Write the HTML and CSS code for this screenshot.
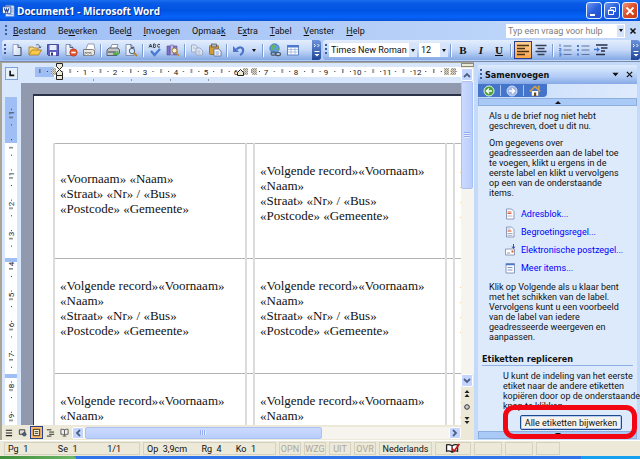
FILE: index.html
```html
<!DOCTYPE html>
<html lang="nl">
<head>
<meta charset="utf-8">
<title>Document1 - Microsoft Word</title>
<link rel="stylesheet" href="styles.css">
</head>
<body>
<svg class="defs" aria-hidden="true">
  <defs>
    <linearGradient id="paper" x1="0" y1="0" x2="1" y2="1"><stop offset="0" stop-color="#fff"/><stop offset="1" stop-color="#c9d6ee"/></linearGradient>
    <pattern id="hatch" width="2" height="2" patternUnits="userSpaceOnUse"><rect width="2" height="2" fill="#d8d4c8"/><rect width="1" height="1" fill="#8c887c"/><rect x="1" y="1" width="1" height="1" fill="#a8a498"/></pattern>
    <pattern id="hticks" x="33.7" width="30.3" height="10" patternUnits="userSpaceOnUse"><rect x="7" y="8" width="1" height="1" fill="#333"/><rect x="15" y="6" width="1" height="4" fill="#444"/><rect x="22.5" y="8" width="1" height="1" fill="#333"/></pattern>
    <pattern id="vticks" y="79.5" width="12" height="30.3" patternUnits="userSpaceOnUse"><rect x="6" y="7" width="1" height="1" fill="#333"/><rect x="4" y="15" width="4" height="1" fill="#444"/><rect x="6" y="22.5" width="1" height="1" fill="#333"/></pattern>
    <symbol id="chev" viewBox="0 0 8 6"><path d="M1 5L4 2L7 5" fill="none" stroke="#4d6185" stroke-width="1.8"/></symbol>
  </defs>
</svg>

<header class="titlebar">
  <svg class="appicon" viewBox="0 0 14 14"><path d="M4 1h8l1 1v11H4z" fill="#e8effb" stroke="#5f86cc" stroke-width=".8"/><path d="M10 4h2M10 6h2M10 8h2M6 11h6" stroke="#7d9ad2"/><rect x=".5" y="2.500" width="9" height="7" fill="#fff" stroke="#2f59a8"/><path d="M2.500 4L4 8L5 5L6 8L7.500 4" fill="none" stroke="#24499c" stroke-width="1.2"/></svg>
  <h1>Document1 - Microsoft Word</h1>
  <div class="winbtns">
    <button aria-label="Minimaliseren"><svg viewBox="0 0 14 14"><path d="M3 11h5" stroke="#fff" stroke-width="2"/></svg></button>
    <button aria-label="Verkleinen"><svg viewBox="0 0 14 14"><path d="M5.500 5V3.500h5v4H9" fill="none" stroke="#fff"/><path d="M3.500 6h5v4.500h-5zM3.500 6.500h5" fill="none" stroke="#fff"/></svg></button>
    <button class="close" aria-label="Sluiten"><svg viewBox="0 0 14 14"><path d="M3.500 3.500l7 7M10.500 3.500l-7 7" stroke="#fff" stroke-width="1.8"/></svg></button>
  </div>
</header>

<nav class="menubar">
  <i class="grip"></i>
  <a href="#"><u>B</u>estand</a><a href="#">Be<u>w</u>erken</a><a href="#">Beel<u>d</u></a><a href="#"><u>I</u>nvoegen</a><a href="#">Opmaa<u>k</u></a><a href="#">E<u>x</u>tra</a><a href="#"><u>T</u>abel</a><a href="#"><u>V</u>enster</a><a href="#"><u>H</u>elp</a>
  <div class="ask"><input type="text" aria-label="Vraag" placeholder="Typ een vraag voor hulp"><button aria-label="Vragen tonen"><i class="down"></i></button></div>
  <button class="docclose" aria-label="Document sluiten"><svg viewBox="0 0 8 8"><path d="M1.500 1.500l5 5M6.500 1.500l-5 5" stroke="#111" stroke-width="1.5"/></svg></button>
</nav>

<div class="toolbars">
  <div class="bar std">
    <i class="grip"></i>
    <button aria-label="Nieuw"><svg viewBox="0 0 14 14"><path d="M3 1.500h5l3 3V12.500H3z" fill="url(#paper)" stroke="#7f96bf" stroke-width=".8"/><path d="M8 1.500v3h3v8H4" fill="none" stroke="#33405c" stroke-width=".8"/></svg></button>
    <button aria-label="Openen"><svg viewBox="0 0 14 14"><path d="M1 12V4h4l1 1h4v3" fill="#f6d673" stroke="#a77a1c" stroke-width=".8"/><path d="M1 12L4 7h9.500L10.500 12z" fill="#fbc84b" stroke="#a77a1c" stroke-width=".8"/><path d="M8 2c2-1 4 0 4 3M10.500 4l1.500 1l1-1.500" fill="none" stroke="#555" stroke-width=".9"/></svg></button>
    <button aria-label="Opslaan"><svg viewBox="0 0 14 14"><path d="M1.500 1.500h11v11h-10l-1-1z" fill="#5b5fc0" stroke="#33368d" stroke-width=".8"/><rect x="3.500" y="2" width="7" height="5" fill="#e4ecfa"/><rect x="4" y="9" width="6" height="3.500" fill="#fff"/><rect x="5" y="9.500" width="2" height="3" fill="#33368d"/></svg></button>
    <button aria-label="Machtiging"><svg viewBox="0 0 14 14"><path d="M2 1.500h4l3 3v8H2z" fill="url(#paper)" stroke="#6d7ea3" stroke-width=".8"/><path d="M6 1.500v3h3" fill="none" stroke="#33405c" stroke-width=".8"/><circle cx="9.500" cy="9.500" r="3.700" fill="#e0512d" stroke="#b53315" stroke-width=".6"/><path d="M7.300 9.500h4.400" stroke="#fff" stroke-width="1.600"/></svg></button>
    <button aria-label="E-mail"><svg viewBox="0 0 14 14"><path d="M4 6L6 1h6l1 6" fill="#fff" stroke="#858ba0" stroke-width=".8"/><path d="M1.500 6.500h9l2 1v4l-2 1h-9z" fill="#e9e7e2" stroke="#6f7075" stroke-width=".9"/><path d="M3 9.500h6v3H3zM3 9.500l3 2l3-2" fill="#fff" stroke="#777" stroke-width=".7"/></svg></button>
    <i class="sep"></i>
    <button aria-label="Afdrukken"><svg viewBox="0 0 14 14"><path d="M4 6l2-4.500h6L10.500 6" fill="#fff" stroke="#6f7c96" stroke-width=".8"/><path d="M1 7l2-2h9l1.500 2v3L11 12.500H1z" fill="#c3c6cc" stroke="#4e5666" stroke-width=".9"/><path d="M2 9h8" stroke="#555" stroke-width="1.200"/><path d="M7 11h4.500V8" fill="none" stroke="#48b83c" stroke-width="1.800"/></svg></button>
    <button aria-label="Afdrukvoorbeeld"><svg viewBox="0 0 14 14"><path d="M2 1.500h5l3 3v8H2z" fill="url(#paper)" stroke="#6d7ea3" stroke-width=".8"/><path d="M7 1.500v3h3" fill="none" stroke="#33405c" stroke-width=".8"/><circle cx="8" cy="8" r="2.700" fill="#cfe6f8" stroke="#56677e"/><path d="M10 10l3 3" stroke="#b6862f" stroke-width="1.800"/></svg></button>
    <i class="sep"></i>
    <button aria-label="Spelling"><svg viewBox="0 0 14 14"><path d="M1 4.500l1.500-3.500L4 4.500M1.500 3.500h2M5.500 1v3.500h1.500q1.500-.5 0-1.700q1.200-1.300 0-1.800zM12 1.500q-2.500-1-2.500 1.300q0 2.200 2.500 1.200" fill="none" stroke="#333" stroke-width=".9"/><path d="M3 8l3.500 4L12 6" fill="none" stroke="#4779d4" stroke-width="2.200"/></svg></button>
    <button aria-label="Onderzoek"><svg viewBox="0 0 14 14"><path d="M1 3h3v9H1z" fill="#7b72c4" stroke="#4d468f" stroke-width=".6"/><path d="M4.500 2h3v10h-3z" fill="#c6bde8" stroke="#665da8" stroke-width=".6"/><path d="M8 3h3v9H8z" fill="#8b83cf" stroke="#4d468f" stroke-width=".6"/><circle cx="8.500" cy="7.500" r="2.500" fill="#f4efe0" stroke="#a07b34"/><path d="M10 9.500l3 3.500" stroke="#c08a2e" stroke-width="1.600"/></svg></button>
    <i class="sep"></i>
    <button aria-label="Kopiëren" disabled><svg viewBox="0 0 14 14"><g fill="#dfe6f4" stroke="#98a6c4" stroke-width=".9"><path d="M1.500 2h4l2 2v5h-6z"/><path d="M6 5h4l2.500 2.500V12H6z"/></g><path d="M7.500 8h3M7.500 10h3M3 5h2" stroke="#98a6c4" stroke-width=".8"/></svg></button>
    <button aria-label="Plakken"><svg viewBox="0 0 14 14"><rect x="1.500" y="2.500" width="9" height="9" rx="1" fill="#d39b36" stroke="#8a621b" stroke-width=".8"/><rect x="3.500" y="1" width="5" height="3" fill="#aab3c4" stroke="#555" stroke-width=".7"/><path d="M6 6h4.500l2.500 2v5H6z" fill="#f4f7fd" stroke="#5a6b91" stroke-width=".8"/><path d="M7.500 9h3.500M7.500 11h3.500" stroke="#6c88c4" stroke-width=".8"/></svg></button>
    <i class="sep"></i>
    <button aria-label="Ongedaan maken"><svg viewBox="0 0 14 14"><path d="M4.500 6.500C7 3 12 4 11 8.500Q10.500 11 8 12" fill="none" stroke="#4b73c9" stroke-width="2.200"/><path d="M1 3v6h6z" fill="#4b73c9"/></svg></button>
    <button class="narrow" aria-label="Meer stappen"><i class="down"></i></button>
    <i class="sep"></i>
    <button aria-label="Hyperlink"><svg viewBox="0 0 14 14"><circle cx="6.500" cy="5.500" r="4.700" fill="#5c9ce0" stroke="#376ba6" stroke-width=".7"/><path d="M3 3q3-3 5 0l-2 2q-1 3-3 2zM8 6l3-1l-1 3z" fill="#65b559"/><g fill="none" stroke="#4d555f" stroke-width="1.200"><rect x="3" y="9" width="5" height="3.200" rx="1.600"/><rect x="7.500" y="9.500" width="5" height="3.200" rx="1.600"/></g></svg></button>
    <button aria-label="Tabel invoegen"><svg viewBox="0 0 14 14"><rect x="1.500" y="2.500" width="11" height="9.500" fill="#fff" stroke="#5379bd" stroke-width=".9"/><rect x="1.500" y="2" width="11" height="2.500" fill="#4c78cf"/><path d="M5 4v8M9 4v8M2 6.500h10M2 9h10" stroke="#9db4dc" stroke-width=".8"/></svg></button>
    <button class="more" aria-label="Werkbalkopties"><svg viewBox="0 0 8 16"><path d="M1 2l1.500 1.500L1 5M4.500 2L6 3.500L4.500 5" fill="none" stroke="#fff"/><path d="M1.500 9.500h5" stroke="#fff"/><path d="M1.500 12h5L4 14.500z" fill="#fff"/></svg></button>
  </div>
  <div class="bar fmt">
    <i class="grip"></i>
    <label class="combo font"><select aria-label="Lettertype"><option>Times New Roman</option></select><i class="down"></i></label>
    <label class="combo size"><select aria-label="Tekengrootte"><option>12</option></select><i class="down"></i></label>
    <i class="sep"></i>
    <button class="b">B</button><button class="it">I</button><button class="un">U</button>
    <i class="sep"></i>
    <button class="on" aria-label="Links uitlijnen"><svg viewBox="0 0 14 14"><path d="M1 2.500h12M1 5.500h8M1 8.500h12M1 11.500h8" stroke="#4a3418" stroke-width="1.500"/></svg></button>
    <button aria-label="Centreren"><svg viewBox="0 0 14 14"><path d="M1.500 2.500h11M3.500 5.500h7M1.500 8.500h11M3.500 11.500h7" stroke="#333f59" stroke-width="1.400"/></svg></button>
    <i class="sep"></i>
    <button aria-label="Nummering"><svg viewBox="0 0 14 14"><path d="M5.500 3h8M5.500 7h8M5.500 11.500h8" stroke="#5f7398" stroke-width="1.200"/><path d="M2 1v3M1 5.500h2v1.500H1.500v1H3.500M1 10h2v3H1M1.500 11.500h1.500" fill="none" stroke="#4a78cf" stroke-width=".9"/></svg></button>
    <button aria-label="Opsommingstekens"><svg viewBox="0 0 14 14"><path d="M5.500 3h8M5.500 7h8M5.500 11.500h8" stroke="#5f7398" stroke-width="1.200"/><path d="M1 2h2v2H1zM1 6h2v2H1zM1 10.500h2v2H1z" fill="#4a78cf"/></svg></button>
    <button aria-label="Inspringing vergroten"><svg viewBox="0 0 14 14"><path d="M2 2h11.500M7 5h6.500M7 8h4M2 11.500h9" stroke="#26304a" stroke-width="1.400"/><path d="M0 6.500h3" stroke="#3f72d6" stroke-width="1.500"/><path d="M3 4l3 2.500L3 9z" fill="#3f72d6"/></svg></button>
    <button class="more" aria-label="Werkbalkopties"><svg viewBox="0 0 8 16"><path d="M1 2l1.500 1.500L1 5M4.500 2L6 3.500L4.500 5" fill="none" stroke="#fff"/><path d="M1.500 9.500h5" stroke="#fff"/><path d="M1.500 12h5L4 14.500z" fill="#fff"/></svg></button>
  </div>
</div>

<div class="work">
  <section class="editor">
    <div class="corner"><button aria-label="Tabstop"><svg viewBox="0 0 12 12"><path d="M4.500 3v5H9" fill="none" stroke="#111" stroke-width="1.800"/></svg></button></div>
    <div class="hruler">
      <svg width="900" height="18">
        <rect x="14" y="4" width="886" height="10" fill="#fff"/>
        <rect x="14" y="4" width="19" height="10" fill="#9ebef5"/>
        <rect x="15" y="4" width="885" height="8" fill="url(#hticks)"/>
        <g class="num"><text x="64" y="12">1</text><text x="94" y="12">2</text><text x="124" y="12">3</text><text x="155" y="12">4</text><text x="185" y="12">5</text><text x="215" y="12">6</text><text x="245" y="12">7</text><text x="275" y="12">8</text><text x="305" y="12">9</text><text x="336" y="12">10</text><text x="366" y="12">11</text><text x="396" y="12">12</text><text x="429" y="12">13</text></g>
        <path d="M30 5h5v7h-5zM222 5h5v7h-5zM231 5h5v7h-5zM423 5h5v7h-5zM430 5h5v7h-5z" fill="url(#hatch)"/>
        <path d="M72.500 16v2M110.500 16v2M149.500 16v2M187.500 16v2" stroke="#99a"/>
        <path d="M35.500.5h6v3l-3 3l-3-3zM35.500 12.500v-3l3-3l3 3v3zM35.500 12.500h6v4h-6z" fill="#ece9d8" stroke="#222"/>
        <path d="M216.500 12.500v-3l3-3l3 3v3z" fill="#ece9d8" stroke="#222"/>
      </svg>
    </div>
    <div class="vscroll">
      <span class="split"></span>
      <button class="sb" aria-label="Omhoog"><svg viewBox="0 0 8 6"><use href="#chev"/></svg></button>
      <span class="track"><span class="thumb"></span></span>
      <button class="sb flip" aria-label="Omlaag"><svg viewBox="0 0 8 6"><use href="#chev"/></svg></button>
      <button class="nav" aria-label="Vorige pagina"><svg viewBox="0 0 8 8"><path d="M4 0l2.500 3h-5zM4 4l2.500 3h-5z" fill="#222"/></svg></button>
      <button class="nav" aria-label="Bladeren"><svg viewBox="0 0 8 8"><circle cx="4" cy="4" r="2.300" fill="#ccc" stroke="#333"/></svg></button>
      <button class="nav" aria-label="Volgende pagina"><svg viewBox="0 0 8 8"><path d="M4 4L1.500 1h5zM4 8L1.500 5h5z" fill="#222"/></svg></button>
    </div>
    <div class="vruler">
      <svg width="12" height="900">
        <rect width="12" height="900" fill="#fff"/>
        <rect y="14" width="12" height="46" fill="#9ebef5"/>
        <rect y="22" width="12" height="878" fill="url(#vticks)"/>
        <rect width="12" height="14" fill="#d8e7fc"/>
        <g class="num"><text transform="translate(9 30) rotate(-90)">1</text><text transform="translate(9 91) rotate(-90)">1</text><text transform="translate(9 121) rotate(-90)">2</text><text transform="translate(9 151) rotate(-90)">3</text><text transform="translate(9 181) rotate(-90)">4</text><text transform="translate(9 212) rotate(-90)">5</text><text transform="translate(9 242) rotate(-90)">6</text><text transform="translate(9 272) rotate(-90)">7</text><text transform="translate(9 303) rotate(-90)">8</text><text transform="translate(9 333) rotate(-90)">9</text></g>
        <path d="M0 175h12v4H0zM0 291h12v4H0z" fill="#9ebef5"/>
      </svg>
    </div>
    <main class="canvas">
      <article class="page">
        <table>
          <colgroup><col class="label"><col class="gap"><col class="label"><col class="gap"><col></colgroup>
          <tr><td>«Voornaam» «Naam»<br>«Straat» «Nr» / «Bus»<br>«Postcode» «Gemeente»</td><td></td><td>«Volgende record»«Voornaam» «Naam»<br>«Straat» «Nr» / «Bus»<br>«Postcode» «Gemeente»</td><td></td><td>«<br>«<br>«<br>«</td></tr>
          <tr><td>«Volgende record»«Voornaam» «Naam»<br>«Straat» «Nr» / «Bus»<br>«Postcode» «Gemeente»</td><td></td><td>«Volgende record»«Voornaam» «Naam»<br>«Straat» «Nr» / «Bus»<br>«Postcode» «Gemeente»</td><td></td><td>«<br>«<br>«<br>«</td></tr>
          <tr class="last"><td>«Volgende record»«Voornaam» «Naam»</td><td></td><td>«Volgende record»«Voornaam» «Naam»</td><td></td><td>«<br>«</td></tr>
        </table>
      </article>
    </main>
    <div class="hscroll">
      <button class="view" aria-label="Normaal"><svg viewBox="0 0 10 10"><path d="M2 2.500h7M2 5.500h7M2 8.500h7" stroke="#222" stroke-width="1.200"/></svg></button>
      <button class="view" aria-label="Weblay-out"><svg viewBox="0 0 10 10"><path d="M1.500 2h6v5h-6z" fill="#ddd" stroke="#333"/><circle cx="7" cy="7" r="2" fill="#4a6a8a" stroke="#222" stroke-width=".6"/></svg></button>
      <button class="view cur" aria-label="Afdrukweergave"><svg viewBox="0 0 10 10"><path d="M1.500 1.500h7v7h-7z" fill="#fff2d8" stroke="#222"/><path d="M3 4h4M3 6h4" stroke="#333"/></svg></button>
      <button class="view" aria-label="Overzicht"><svg viewBox="0 0 10 10"><path d="M1 2h5M3.500 4.500H9M3.500 7H9M1 9h5" stroke="#222"/></svg></button>
      <button class="view" aria-label="Lezen"><svg viewBox="0 0 10 10"><path d="M1 1.500q2-.5 4 .5q2-1 4-.5V7Q7 6.500 5 8Q3 6.500 1 7zM5 2v6M3 9h4" fill="#eee" stroke="#444" stroke-width=".9"/></svg></button>
      <button class="sb left" aria-label="Naar links"><svg viewBox="0 0 8 6"><use href="#chev"/></svg></button>
      <span class="track"><span class="thumb"></span></span>
      <button class="sb right" aria-label="Naar rechts"><svg viewBox="0 0 8 6"><use href="#chev"/></svg></button>
    </div>
  </section>

  <aside class="pane">
    <div class="panehead"><i class="grip"></i><h2>Samenvoegen</h2><button aria-label="Andere taakvensters"><svg viewBox="0 0 8 8"><path d="M.5 2h7L4 6z" fill="#111"/></svg></button><button aria-label="Taakvenster sluiten"><svg viewBox="0 0 8 8"><path d="M1 1l6 6M7 1L1 7" stroke="#111" stroke-width="1.400"/></svg></button></div>
    <div class="panenav"><div class="navtab">
      <button aria-label="Vorige"><svg viewBox="0 0 12 12"><circle cx="6" cy="6" r="5" fill="#4aa43a" stroke="#e6f2e0"/><path d="M9 6H3.500M6 3.500L3.500 6L6 8.500" fill="none" stroke="#fff" stroke-width="1.400"/></svg></button><i></i>
      <button aria-label="Volgende"><svg viewBox="0 0 12 12"><circle cx="6" cy="6" r="5" fill="#9fb8e6" stroke="#cfdcf5"/><path d="M3 6h5.500M6 3.500L8.500 6L6 8.500" fill="none" stroke="#fff" stroke-width="1.400"/></svg></button><i></i>
      <button aria-label="Startpagina"><svg viewBox="0 0 12 12"><path d="M2.500 6v5h7V6" fill="#fff" stroke="#777" stroke-width=".7"/><path d="M.8 6.500L6 1.500l5.200 5M8.500 1.500h1.500v3" fill="none" stroke="#e0a23a" stroke-width="1.400"/><rect x="5" y="7.500" width="2.200" height="3.500" fill="#6b4a22"/></svg></button>
    </div></div>
    <button class="panescroll" aria-label="Omhoog schuiven"><svg viewBox="0 0 8 4"><path d="M1 4h6L4 1z" fill="#111"/></svg></button>
    <div class="panebody">
      <p>Als u de brief nog niet hebt<br>geschreven, doet u dit nu.</p>
      <p>Om gegevens over<br>geadresseerden aan de label toe<br>te voegen, klikt u ergens in de<br>eerste label en klikt u vervolgens<br>op een van de onderstaande<br>items.</p>
      <ul>
        <li><svg viewBox="0 0 10 12"><path d="M1.500 1h5l2.500 2.500V11H1.500z" fill="#fff" stroke="#7383a6" stroke-width=".8"/><path d="M2.500 4h4M2.500 5.500h4" stroke="#d9623f"/><path d="M2.500 8h5" stroke="#a9b4ca"/></svg><a href="#">Adresblok...</a></li>
        <li><svg viewBox="0 0 10 12"><path d="M1.500 1h5l2.500 2.500V11H1.500z" fill="#fff" stroke="#7383a6" stroke-width=".8"/><path d="M2.500 5h4" stroke="#d9623f" stroke-width="1.200"/><path d="M2.500 3h3M2.500 7.500h5M2.500 9.300h5" stroke="#8a97b3" stroke-width=".8"/></svg><a href="#">Begroetingsregel...</a></li>
        <li><svg viewBox="0 0 10 12"><path d="M.5 5h9v6h-9z" fill="#fff" stroke="#7a86a0" stroke-width=".8"/><path d="M6.500 6.500h2v2h-2z" fill="#d05a3a"/><path d="M2 9h3" stroke="#8a97b3"/><path d="M8.500 0v4M7 2.500L8.500 4.500L10 2.500" fill="none" stroke="#3c4aa8"/></svg><a href="#">Elektronische postzegel...</a></li>
        <li><svg viewBox="0 0 10 12"><path d="M1 1.500h8.500V11H1z" fill="#fff" stroke="#6f83ad" stroke-width=".8"/><path d="M1 2.500h8.500" stroke="#4b78cc" stroke-width="1.600"/><path d="M2.500 5.500h5M2.500 8h5" stroke="#7e93bb"/></svg><a href="#">Meer items...</a></li>
      </ul>
      <p>Klik op Volgende als u klaar bent<br>met het schikken van de label.<br>Vervolgens kunt u een voorbeeld<br>van de label van iedere<br>geadresseerde weergeven en<br>aanpassen.</p>
      <h3>Etiketten repliceren</h3>
      <p class="indent">U kunt de indeling van het eerste<br>etiket naar de andere etiketten<br>kopiëren door op de onderstaande<br>knop te klikken.</p>
      <div class="action"><button class="update">Alle etiketten bijwerken</button><span class="marker"></span></div>
    </div>
    <button class="panescroll" aria-label="Omlaag schuiven"><svg viewBox="0 0 8 4"><path d="M1 0h6L4 3z" fill="#111"/></svg></button>
  </aside>
</div>

<footer class="status">
  <div class="cell pos"><span>Pg&nbsp; 1</span><span>Se&nbsp; 1</span><span>1/1</span></div>
  <div class="cell at"><span>Op&nbsp; 3,9cm</span><span>Rg&nbsp; 4</span><span>Ko&nbsp; 1</span></div>
  <div class="cell off">OPN</div><div class="cell off">WZG</div><div class="cell off">UIT</div><div class="cell off">OVR</div>
  <div class="cell lang">Nederlands</div>
  <div class="cell book"><svg viewBox="0 0 16 12"><path d="M1 2q3-1 6 1q3-2 6-1v7q-3-1-6 1q-3-2-6-1zM7 3v7" fill="#fff" stroke="#222" stroke-width="1.400"/><path d="M7 6l2 3l6-8" fill="none" stroke="#c5161d" stroke-width="1.800"/></svg></div>
  <div class="cell blank"></div><div class="cell blank"></div><div class="cell blank"></div>
</footer>
<div class="taskbar"><span class="start"></span><span class="tray"></span></div>
</body>
</html>
```
FILE: styles.css
```css
* { box-sizing: border-box; }
html, body { height: 100%; margin: 0; }
body {
  display: grid;
  grid-template-rows: 21px 19px 22px minmax(0, 1fr) 16px 3px;
  overflow: hidden;
  background: #ece9d8;
  color: #111;
  font: 9px/10px Roboto, "Liberation Sans", sans-serif;
}
button { display: grid; place-items: center; padding: 0; border: 0; background: none; color: inherit; font: inherit; }
h1, h2, h3, p, ul { margin: 0; padding: 0; }
svg { display: block; }
.defs { position: absolute; width: 0; height: 0; }
.down { width: 0; height: 0; border: 2px solid transparent; border-top: 3px solid #111; border-bottom: 0; }
.grip { width: 2px; height: 12px; background: repeating-linear-gradient(#3d5c9e 0 2px, transparent 2px 4px); }

/* Title bar */
.titlebar {
  display: flex; align-items: center; gap: 2px; padding: 0 2px;
  background: linear-gradient(#1b6ff0 0, #0a5be6 15%, #0053e1 50%, #0663fb 80%, #0650d4 100%);
}
.appicon { width: 13px; height: 14px; }
.titlebar h1 { flex: 1; color: #fff; font: bold 10px/16px "Open Sans", sans-serif; text-shadow: 1px 1px #0a2a80; white-space: nowrap; }
.winbtns { display: flex; gap: 2px; }
.winbtns button { width: 16px; height: 17px; border: 1px solid #e4edff; border-radius: 3px; background: linear-gradient(135deg, #6f98f2, #2a5fdc 50%, #1d4ccb); }
.winbtns svg { width: 14px; height: 14px; }
.winbtns .close { background: linear-gradient(135deg, #ef9478, #dc4c26 50%, #c93c12); }

/* Menu bar */
.menubar { display: flex; align-items: center; gap: 12px; padding: 0 3px 0 5px; background: linear-gradient(90deg, #9ebef5, #c4dafa); }
.menubar .grip { margin-right: -6px; }
.menubar a { color: #111; text-decoration: none; white-space: nowrap; }
.ask { display: flex; margin-left: auto; width: 119px; height: 14px; background: #fff; }
.ask input { flex: 1; min-width: 0; padding: 0 2px; border: 0; background: none; font: inherit; }
.ask input::placeholder { color: #808080; opacity: 1; }
.ask button { width: 9px; background: #d5e4fb; border: 1px solid #fff; }
.docclose { width: 8px; margin-left: -8px; }
.docclose svg { width: 8px; height: 8px; }

/* Toolbars */
.toolbars { display: flex; gap: 2px; padding-bottom: 1px; background: linear-gradient(90deg, #9ebef5, #c4dafa); border-bottom: 1px solid #7c8aa8; }
.bar { display: flex; align-items: center; padding-left: 2px; border-radius: 3px; background: linear-gradient(#e3eefe, #c5d9f9 50%, #84a8e4); }
.bar button { width: 18px; height: 18px; }
.bar svg { width: 14px; height: 14px; }
.bar button.narrow { width: 12px; }
.sep { width: 1px; height: 13px; margin: 0 3px 0 2px; background: #7d9ccf; box-shadow: 1px 0 #f4f8ff; }
.std { width: 319px; margin-left: 2px; }
.std > .grip { margin-right: 2px; }
.fmt { flex: 1; }
.bar button.more { align-self: stretch; width: 9px; height: auto; margin-left: auto; border-radius: 0 3px 3px 0; background: linear-gradient(#6b93db, #1f4797); }
.bar .more svg { width: 8px; height: 16px; }
.combo { position: relative; display: flex; height: 14px; margin-left: 2px; background: #fff; }
.combo select { width: 100%; padding: 0 2px; border: 0; background: linear-gradient(#d5e4fb, #d5e4fb) right / 8px 100% no-repeat #fff; appearance: none; color: #111; font: inherit; }
.combo .down { position: absolute; right: 2px; top: 6px; pointer-events: none; }
.font { width: 88px; }
.size { width: 29px; }
.bar .b, .bar .it, .bar .un { font: bold 11px/14px "Liberation Serif", serif; }
.bar .it { font-style: italic; }
.bar .un { text-decoration: underline; }
.bar .on { border: 1px solid #2b3f8c; background: linear-gradient(#ffd096, #fba64c); }

/* Work area */
.work { display: grid; grid-template-columns: minmax(0, 1fr) 163px; background: #c4dafa; }
.editor {
  display: grid; min-height: 0; margin-right: 3px;
  grid-template: 20px minmax(0, 1fr) 15px / 19px minmax(0, 1fr) 13px;
  grid-template-areas: "corner hruler vscroll" "vruler canvas vscroll" "hscroll hscroll vscroll";
  border-left: 2px solid #a8a594; border-top: 1px solid #a8a594; background: #ece9d8;
}
.corner { grid-area: corner; display: grid; place-items: center; background: #d8e7fc; }
.corner button { width: 13px; height: 13px; border: 1px solid #7ba0dc; background: #e6effc; }
.corner svg { width: 11px; height: 11px; }
.hruler { grid-area: hruler; overflow: hidden; background: #d8e7fc; }
.vruler { grid-area: vruler; padding-left: 3px; overflow: hidden; background: #d8e7fc; }
.num text { fill: #222; font-size: 8px; text-anchor: middle; }
.canvas { grid-area: canvas; overflow: hidden; padding: 11px 0 0 12px; background: #9099ae; }
.page { width: 640px; min-height: 600px; padding: 47px 0 0 19px; border: solid #2c3245; border-width: 2px 0 0 1px; background: #fff; }
.page table { width: 592px; table-layout: fixed; border-collapse: collapse; font: 13px/15px "Liberation Serif", serif; }
.label { width: 192px; }
.gap { width: 8px; }
.page tr { height: 115px; }
.page td { padding: 0 0 16px 5px; border: solid #b4b4b4; border-width: 1px 0; border-left: 2px solid #dcdcdc; vertical-align: middle; }
.page td:nth-child(even) { padding: 0; }
.page .last td { padding-top: 19px; vertical-align: top; }

/* Scroll bars */
.vscroll { grid-area: vscroll; display: flex; flex-direction: column; padding-bottom: 14px; background: #ece9d8; }
.split { height: 4px; margin-bottom: 1px; border: 1px solid #8c8a7a; background: #ece9d8; }
.sb { flex: none; width: 12px; height: 13px; border: 1px solid #fff; border-radius: 2px; background: #c3d5fd; }
.sb svg { width: 8px; height: 6px; }
.flip svg { rotate: 180deg; }
.left svg { rotate: -90deg; }
.right svg { rotate: 90deg; }
.track { flex: 1; display: flex; background: #f5f4ee; }
.thumb { border: 1px solid #a9c1f5; border-radius: 2px; }
.vscroll .track { flex-direction: column; }
.vscroll .thumb {
  width: 12px; height: 37%;
  background: repeating-linear-gradient(#8faaf0 0 1px, #e6eefe 1px 2px) center / 6px 6px no-repeat, linear-gradient(90deg, #cbdafe, #b9cdfb);
}
.nav { height: 13px; width: 12px; }
.nav svg { width: 8px; height: 8px; }
.hscroll { grid-area: hscroll; display: flex; align-items: center; background: #ece9d8; }
.view { width: 13px; height: 13px; margin-right: 1px; }
.view svg { width: 9px; height: 9px; }
.cur { border: 1px solid #2b3f8c; background: #fdb863; }
.hscroll .sb { height: 12px; }
.hscroll .track { height: 12px; padding-left: 1px; }
.hscroll .thumb {
  width: 65%;
  background: repeating-linear-gradient(90deg, #8faaf0 0 1px, #e6eefe 1px 2px) center / 6px 5px no-repeat, linear-gradient(#cbdafe, #b9cdfb);
}

/* Task pane */
.pane { display: flex; flex-direction: column; min-height: 0; padding: 3px 3px 1px 1px; background: #c4dafa; }
.panehead { display: flex; align-items: center; flex: none; height: 19px; padding: 0 4px 0 2px; background: linear-gradient(#dfebfd, #b3cdf6 60%, #86a9e6); }
.panehead h2 { flex: 1; margin-left: 3px; font: bold 9px/12px "DejaVu Sans Condensed", sans-serif; }
.panehead button { width: 8px; margin-left: 6px; }
.panehead svg { width: 7px; height: 7px; }
.panenav { flex: none; height: 14px; background: linear-gradient(90deg, #c4dafa, #dfebfd); }
.navtab { display: flex; align-items: center; gap: 5px; width: 69px; height: 13px; padding-left: 5px; border-radius: 0 0 4px 0; background: #4574cb; }
.navtab svg { width: 12px; height: 12px; }
.navtab i { width: 1px; height: 11px; background: #a9c3f3; }
.panescroll { flex: none; height: 8px; border: 1px solid #8eaede; background: #a9c9f7; }
.panescroll svg { width: 8px; height: 4px; }
.panebody { flex: 1; min-height: 0; padding: 5px 0 0 11px; background: #ddeafc; white-space: nowrap; }
.panebody p { margin-bottom: 7px; }
.panebody ul { margin-bottom: 5px; list-style: none; }
.panebody li { display: flex; align-items: center; gap: 6px; height: 18px; padding-left: 16px; }
.panebody li svg { width: 10px; height: 12px; }
.panebody a { color: #00f; text-decoration: none; }
.panebody h3 { margin: 12px 4px 5px -7px; border-bottom: 1px solid #8eb0e4; font: bold 9px/11px "DejaVu Sans Condensed", sans-serif; }
.panebody .indent { margin: 0 0 4px 14px; }
.action { position: relative; width: 102px; margin-left: 31px; }
.update { width: 102px; height: 15px; border: 1px solid #1c4a8c; border-radius: 2px; background: #f4f3ee; box-shadow: inset 0 0 0 1px #b9cdf3; white-space: nowrap; }
.marker { position: absolute; inset: -10px -15px -9px -17px; border: 5px solid #f30613; border-radius: 11px; pointer-events: none; }

/* Status bar */
.status { display: flex; align-items: center; gap: 3px; padding: 0 4px; border-top: 1px solid #fff; background: #ece9d8; }
.cell { display: flex; align-items: center; justify-content: center; height: 13px; border: 1px solid #d6d2c2; white-space: nowrap; }
.pos { width: 136px; justify-content: space-between; padding: 0 18px 0 3px; }
.at { width: 133px; justify-content: space-between; padding: 0 19px 0 3px; }
.off { width: 22px; color: #aca899; }
.lang { width: 53px; }
.book { width: 36px; }
.book svg { width: 16px; height: 11px; }
.blank { width: 28px; }
.blank:last-child { width: 24px; }
.taskbar { display: flex; justify-content: space-between; background: #2f74e8; }
.start { width: 76px; border-radius: 0 3px 0 0; background: linear-gradient(90deg, #3f8f3c, #6cb768); }
.tray { width: 59px; background: #14a0ee; }
```
